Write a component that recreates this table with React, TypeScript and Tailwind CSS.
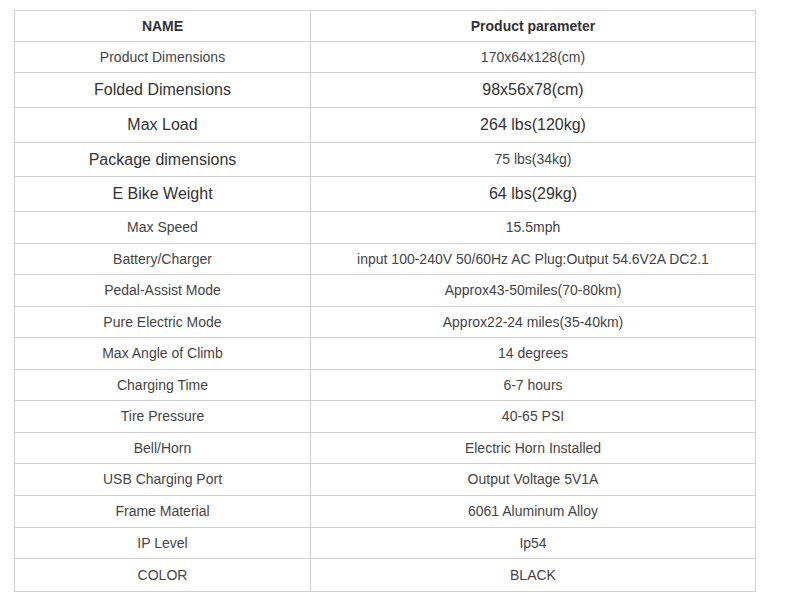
import React from "react";

type Row = { name: string; value: string; h: string; nameBig?: boolean; valueBig?: boolean };

const rows: Row[] = [
  { name: "Product Dimensions", value: "170x64x128(cm)", h: "h-[31px]" },
  { name: "Folded Dimensions", value: "98x56x78(cm)", h: "h-[35px]", nameBig: true, valueBig: true },
  { name: "Max Load", value: "264 lbs(120kg)", h: "h-[35px]", nameBig: true, valueBig: true },
  { name: "Package dimensions", value: "75 lbs(34kg)", h: "h-[34px]", nameBig: true },
  { name: "E Bike Weight", value: "64 lbs(29kg)", h: "h-[35px]", nameBig: true, valueBig: true },
  { name: "Max Speed", value: "15.5mph", h: "h-[32px]" },
  { name: "Battery/Charger", value: "input 100-240V 50/60Hz AC Plug:Output 54.6V2A DC2.1", h: "h-[31px]" },
  { name: "Pedal-Assist Mode", value: "Approx43-50miles(70-80km)", h: "h-[32px]" },
  { name: "Pure Electric Mode", value: "Approx22-24 miles(35-40km)", h: "h-[31px]" },
  { name: "Max Angle of Climb", value: "14 degrees", h: "h-[32px]" },
  { name: "Charging Time", value: "6-7 hours", h: "h-[31px]" },
  { name: "Tire Pressure", value: "40-65 PSI", h: "h-[32px]" },
  { name: "Bell/Horn", value: "Electric Horn Installed", h: "h-[31px]" },
  { name: "USB Charging Port", value: "Output Voltage 5V1A", h: "h-[32px]" },
  { name: "Frame Material", value: "6061 Aluminum Alloy", h: "h-[32px]" },
  { name: "IP Level", value: "Ip54", h: "h-[31px]" },
  { name: "COLOR", value: "BLACK", h: "h-[32px]" },
];

const App = () => {
  return (
    <div className="min-h-[606px] w-[800px] bg-white pt-[10px] pl-[14px] font-['Liberation_Sans',Arial,sans-serif] text-[#444]">
      <div className="w-[742px] border border-[#d0d0d0]">
        {/* header */}
        <div className="grid h-[31px] grid-cols-[296px_1fr] border-b border-[#d0d0d0] text-[14px] font-bold text-[#333]">
          <div className="flex items-center justify-center border-r border-[#d0d0d0]">NAME</div>
          <div className="flex items-center justify-center">Product parameter</div>
        </div>

        {rows.map((r, i) => (
          <div
            key={r.name}
            className={`grid grid-cols-[296px_1fr] ${r.h} ${i < rows.length - 1 ? "border-b border-[#d0d0d0]" : ""}`}
          >
            <div
              className={`flex items-center justify-center border-r border-[#d0d0d0] ${r.nameBig ? "text-[16px] text-[#333]" : "text-[14px]"}`}
            >
              {r.name}
            </div>
            <div className={`flex items-center justify-center ${r.valueBig ? "text-[16px] text-[#333]" : "text-[14px]"}`}>
              {r.value}
            </div>
          </div>
        ))}
      </div>
    </div>
  );
};

export default App;
